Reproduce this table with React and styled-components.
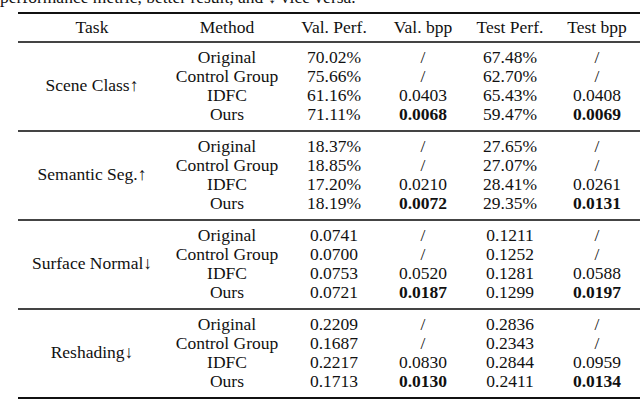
import React from 'react'
import styled, { createGlobalStyle } from 'styled-components'

const GlobalStyle = createGlobalStyle`
  html, body {
    margin: 0;
    padding: 0;
    background: #fff;
  }
  body {
    width: 640px;
    height: 400px;
    overflow: hidden;
    font-family: "Liberation Serif", "Times New Roman", serif;
    font-size: 17.5px;
    color: #111;
  }
`

const Caption = styled.div`
  margin-top: -12px;
  height: 19px;
  line-height: 19px;
  white-space: nowrap;
`

const Table = styled.div`
  margin-left: 18px;
  width: 640px;
  border-top: 2px solid #111;
  margin-top: 5px;
`

const cols = '148px 122px 92px 86px 88px 86px'

const HeaderRow = styled.div`
  display: grid;
  grid-template-columns: ${cols};
  height: 27px;
  align-items: center;
  border-bottom: 2px solid #444;
`

const Group = styled.div`
  display: grid;
  grid-template-columns: ${cols};
  grid-auto-rows: 19px;
  padding: 4.5px 0 6.5px;
  border-bottom: 2px solid ${props => (props.last ? '#111' : '#444')};
`

const Cell = styled.div`
  text-align: center;
  line-height: 19px;
  white-space: nowrap;
  font-weight: ${props => (props.bold ? 700 : 400)};
`

const TaskCell = styled(Cell)`
  grid-row: 1 / span 4;
  align-self: center;
`

const groups = [
  {
    task: 'Scene Class↑',
    rows: [
      ['Original', '70.02%', '/', '67.48%', '/'],
      ['Control Group', '75.66%', '/', '62.70%', '/'],
      ['IDFC', '61.16%', '0.0403', '65.43%', '0.0408'],
      ['Ours', '71.11%', '0.0068', '59.47%', '0.0069'],
    ],
  },
  {
    task: 'Semantic Seg.↑',
    rows: [
      ['Original', '18.37%', '/', '27.65%', '/'],
      ['Control Group', '18.85%', '/', '27.07%', '/'],
      ['IDFC', '17.20%', '0.0210', '28.41%', '0.0261'],
      ['Ours', '18.19%', '0.0072', '29.35%', '0.0131'],
    ],
  },
  {
    task: 'Surface Normal↓',
    rows: [
      ['Original', '0.0741', '/', '0.1211', '/'],
      ['Control Group', '0.0700', '/', '0.1252', '/'],
      ['IDFC', '0.0753', '0.0520', '0.1281', '0.0588'],
      ['Ours', '0.0721', '0.0187', '0.1299', '0.0197'],
    ],
  },
  {
    task: 'Reshading↓',
    rows: [
      ['Original', '0.2209', '/', '0.2836', '/'],
      ['Control Group', '0.1687', '/', '0.2343', '/'],
      ['IDFC', '0.2217', '0.0830', '0.2844', '0.0959'],
      ['Ours', '0.1713', '0.0130', '0.2411', '0.0134'],
    ],
  },
]

const headers = ['Task', 'Method', 'Val. Perf.', 'Val. bpp', 'Test Perf.', 'Test bpp']

export default function App() {
  return (
    <>
      <GlobalStyle />
      <Caption>performance metric, better result, and ↓ vice versa.</Caption>
      <Table>
        <HeaderRow>
          {headers.map(h => (
            <Cell key={h}>{h}</Cell>
          ))}
        </HeaderRow>
        {groups.map((g, gi) => (
          <Group key={g.task} last={gi === groups.length - 1}>
            <TaskCell>{g.task}</TaskCell>
            {g.rows.map((r, ri) =>
              r.map((v, ci) => (
                <Cell
                  key={`${ri}-${ci}`}
                  bold={r[0] === 'Ours' && (ci === 2 || ci === 4)}
                >
                  {v}
                </Cell>
              ))
            )}
          </Group>
        ))}
      </Table>
    </>
  )
}
